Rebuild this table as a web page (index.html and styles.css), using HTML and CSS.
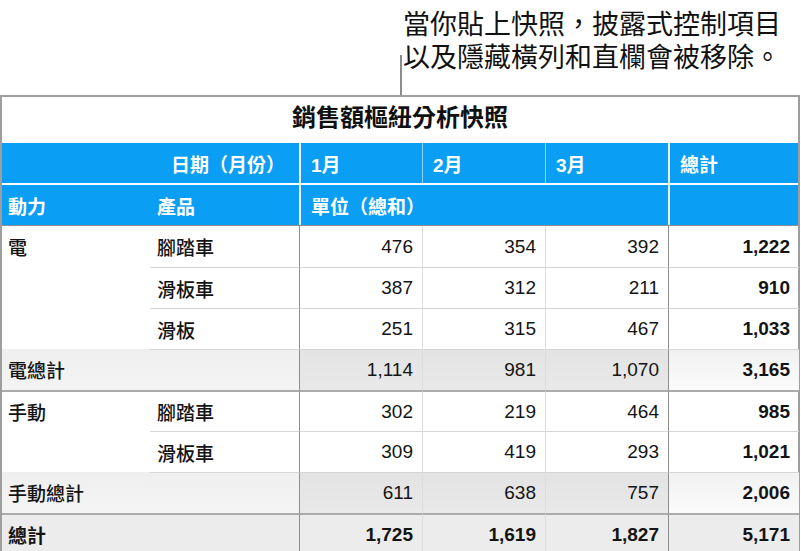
FILE: index.html
```html
<!DOCTYPE html>
<html lang="zh-Hant">
<head>
<meta charset="utf-8">
<title>銷售額樞紐分析快照</title>
<link rel="stylesheet" href="styles.css">
</head>
<body>
<div class="page">
  <div class="note">
    <div class="leader"></div>
    <div class="callout">
      <span class="cl">當你貼上快照，披露式控制項目</span>
      <span class="cl">以及隱藏橫列和直欄會被移除。</span>
    </div>
  </div>
  <div class="sheet">
    <div class="title">銷售額樞紐分析快照</div>
    <div class="row head h1">
      <div class="c span2 right">日期（月份）</div>
      <div class="c vw">1月</div>
      <div class="c vwl">2月</div>
      <div class="c vwl">3月</div>
      <div class="c vw">總計</div>
    </div>
    <div class="row head h2">
      <div class="c lab1">動力</div>
      <div class="c">產品</div>
      <div class="c span3 vw">單位（總和）</div>
      <div class="c vw"></div>
    </div>

    <div class="row data">
      <div class="c lab1 label">電</div>
      <div class="c label">腳踏車</div>
      <div class="c num vd">476</div>
      <div class="c num vl">354</div>
      <div class="c num vl">392</div>
      <div class="c num vd bold">1,222</div>
    </div>
    <div class="row data inner">
      <div class="c lab1"></div>
      <div class="c label">滑板車</div>
      <div class="c num vd">387</div>
      <div class="c num vl">312</div>
      <div class="c num vl">211</div>
      <div class="c num vd bold">910</div>
    </div>
    <div class="row data inner">
      <div class="c lab1"></div>
      <div class="c label">滑板</div>
      <div class="c num vd">251</div>
      <div class="c num vl">315</div>
      <div class="c num vl">467</div>
      <div class="c num vd bold">1,033</div>
    </div>
    <div class="row data inner sub">
      <div class="c lab1 label">電總計</div>
      <div class="c"></div>
      <div class="c num vd mid">1,114</div>
      <div class="c num vl mid">981</div>
      <div class="c num vl mid">1,070</div>
      <div class="c num vd bold tot">3,165</div>
    </div>

    <div class="row data group">
      <div class="c lab1 label">手動</div>
      <div class="c label">腳踏車</div>
      <div class="c num vd">302</div>
      <div class="c num vl">219</div>
      <div class="c num vl">464</div>
      <div class="c num vd bold">985</div>
    </div>
    <div class="row data inner">
      <div class="c lab1"></div>
      <div class="c label">滑板車</div>
      <div class="c num vd">309</div>
      <div class="c num vl">419</div>
      <div class="c num vl">293</div>
      <div class="c num vd bold">1,021</div>
    </div>
    <div class="row data inner sub">
      <div class="c lab1 label">手動總計</div>
      <div class="c"></div>
      <div class="c num vd mid">611</div>
      <div class="c num vl mid">638</div>
      <div class="c num vl mid">757</div>
      <div class="c num vd bold tot">2,006</div>
    </div>

    <div class="row data grand">
      <div class="c lab1 label">總計</div>
      <div class="c"></div>
      <div class="c num vd bold">1,725</div>
      <div class="c num vl bold">1,619</div>
      <div class="c num vl bold">1,827</div>
      <div class="c num vd bold">5,171</div>
    </div>
  </div>
</div>
</body>
</html>
```
FILE: styles.css
```css
html, body {
  margin: 0;
  padding: 0;
  background: #ffffff;
}

body {
  font-family: "Liberation Sans", "Noto Sans CJK TC", sans-serif;
  color: #111111;
  width: 801px;
  height: 551px;
  overflow: hidden;
}

.page {
  width: 801px;
}

/* callout */
.note {
  height: 95px;
  display: flex;
  padding-left: 400px;
  box-sizing: border-box;
}

.leader {
  width: 2px;
  height: 40px;
  align-self: flex-end;
  background: #8c8c8c;
}

.callout {
  margin: 0 0 0 1px;
  padding-top: 9px;
  display: flex;
  flex-direction: column;
  font-family: "Liberation Sans", "Noto Sans CJK TC", sans-serif;
  font-size: 27px;
  line-height: 33px;
  color: #111111;
  white-space: nowrap;
}

.cl {
  display: block;
  height: 33px;
}

/* sheet */
.sheet {
  width: 800px;
  border: 2px solid #9e9e9e;
  border-bottom: none;
  box-sizing: border-box;
}

.title {
  height: 46px;
  padding-bottom: 9px;
  box-sizing: border-box;
  display: flex;
  align-items: center;
  justify-content: center;
  font-family: "Noto Sans CJK TC", sans-serif;
  font-weight: 700;
  font-size: 24px;
  color: #111111;
}

.row {
  display: grid;
  grid-template-columns: 148px 149px 123px 123px 123px 131px;
}

.c {
  box-sizing: border-box;
  display: flex;
  align-items: center;
  padding: 0 9px 0 7px;
  font-size: 19px;
  white-space: nowrap;
  min-width: 0;
}

.c.lab1 {
  padding-left: 6px;
}

.span2 {
  grid-column: span 2;
}

.span3 {
  grid-column: span 3;
}

.right {
  justify-content: flex-end;
  padding-right: 14px;
}

/* header rows */
.head {
  background: #0a9ef5;
  color: #ffffff;
  font-weight: 700;
}

.head .c {
  font-weight: 700;
}

.head .c.vw,
.head .c.vwl {
  padding-left: 10px;
}

.h1 {
  height: 42px;
  border-bottom: 2px solid #ffffff;
  box-sizing: border-box;
}

.h2 {
  height: 41px;
  border-bottom: 1px solid #8e8e8e;
  box-sizing: border-box;
}

.vw {
  border-left: 2px solid rgba(255, 255, 255, 0.95);
}

.vwl {
  border-left: 1px solid rgba(255, 255, 255, 0.55);
}

/* data rows */
.data {
  height: 41px;
}

.data .c {
  color: #141414;
}

.label {
  font-family: "Noto Sans CJK TC", sans-serif;
  font-weight: 500;
}

.num {
  justify-content: flex-end;
  padding-right: 9px;
}

.vd {
  border-left: 1px solid #8e8e8e;
}

.vl {
  border-left: 1px solid #dddddd;
}

.bold {
  font-weight: 700;
}

.inner .c {
  border-top: 1px solid #d6d6d6;
}

.inner .c.lab1 {
  border-top: none;
}

.sub .c {
  background: linear-gradient(#efefef, #f4f4f4);
}

.sub .c.mid {
  background: linear-gradient(#e3e3e3, #e9e9e9);
}

.sub .c.tot {
  background: linear-gradient(#f1f1f1, #fbfbfb);
}

.group .c {
  border-top: 2px solid #ababab;
}

.grand .c {
  border-top: 2px solid #ababab;
  background: #ececec;
}

.grand .c.label {
  font-weight: 700;
}
```
